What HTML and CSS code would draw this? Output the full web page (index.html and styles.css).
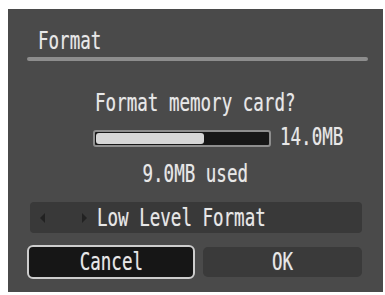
FILE: index.html
```html
<!DOCTYPE html>
<html>
<head>
<meta charset="utf-8">
<link rel="stylesheet" href="styles.css">
</head>
<body>
<div class="panel">
  <div class="title"><span class="t left">Format</span></div>
  <div class="rule"></div>
  <div class="line center-text"><span class="t">Format memory card?</span></div>
  <div class="cap-row">
    <div class="bar"><div class="fill" style="width:108px"></div></div>
    <span class="t left cap-text">14.0MB</span>
  </div>
  <div class="line used center-text"><span class="t">9.0MB used</span></div>
  <div class="option">
    <span class="arr arr-l"></span>
    <span class="arr arr-r"></span>
    <span class="t left opt-text">Low Level Format</span>
  </div>
  <div class="buttons">
    <div class="btn cancel"><span class="t">Cancel</span></div>
    <div class="btn ok"><span class="t">OK</span></div>
  </div>
</div>
</body>
</html>
```

FILE: styles.css
```css
html, body {
  margin: 0;
  padding: 0;
  background: #ffffff;
}

.panel {
  box-sizing: border-box;
  width: 375px;
  height: 283px;
  margin: 9px 0 0 8px;
  padding-top: 20px;
  background: #4a4a4a;
  font-family: "DejaVu Sans Mono", monospace;
  font-size: 24px;
  line-height: 24px;
  color: #e8e8e8;
  text-shadow: 0 0 1px rgba(255, 255, 255, 0.35);
  display: flex;
  flex-direction: column;
}

.t {
  display: inline-block;
  white-space: nowrap;
  transform: scaleX(0.73);
  transform-origin: center;
}

.t.left {
  transform-origin: left center;
}

.title {
  height: 24px;
  padding-left: 30px;
}

.rule {
  height: 4px;
  margin: 4px 15px 0 19px;
  border-radius: 2px;
  background: #8d8d8d;
}

.line {
  height: 24px;
  margin-top: 30px;
}

.center-text {
  text-align: center;
}

.cap-row {
  height: 24px;
  margin-top: 10px;
  padding-left: 85px;
  display: flex;
  align-items: flex-start;
}

.bar {
  box-sizing: border-box;
  width: 178px;
  height: 17px;
  margin-top: 5px;
  padding: 1px;
  border: 2px solid #8e8e8e;
  border-radius: 3px;
  background: #171717;
  flex: none;
}

.fill {
  height: 11px;
  border-radius: 3px;
  background: #d6d6d6;
}

.cap-text {
  margin-left: 9px;
}

.used {
  margin-top: 13px;
}

.option {
  height: 31px;
  margin: 16px 21px 0 22px;
  padding-left: 10px;
  border-radius: 4px;
  background: #393939;
  display: flex;
  align-items: center;
}

.arr {
  width: 0;
  height: 0;
  border-top: 5px solid transparent;
  border-bottom: 5px solid transparent;
  flex: none;
}

.arr-l {
  border-right: 5px solid #222222;
}

.arr-r {
  margin-left: 37px;
  border-left: 5px solid #222222;
}

.opt-text {
  margin-left: 10px;
}

.buttons {
  height: 34px;
  margin-top: 12px;
  padding: 0 21px 0 19px;
  display: flex;
  align-items: center;
  gap: 8px;
}

.btn {
  box-sizing: border-box;
  display: flex;
  align-items: center;
  justify-content: center;
}

.cancel {
  width: 168px;
  height: 34px;
  border: 2px solid #cdcdcd;
  border-radius: 6px;
  background: #161616;
}

.ok {
  width: 159px;
  height: 30px;
  border-radius: 5px;
  background: #3a3a3a;
}
```
